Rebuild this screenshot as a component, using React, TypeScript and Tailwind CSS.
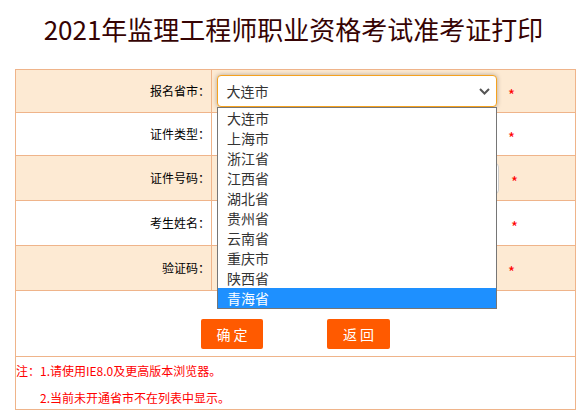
import React from "react";

const FONT = { fontFamily: '"Noto Sans CJK SC", "Liberation Sans", sans-serif' };

const options = ["大连市", "上海市", "浙江省", "江西省", "湖北省", "贵州省", "云南省", "重庆市", "陕西省", "青海省"];

function Label({ text }: { text: string }) {
  return (
    <div className="w-[196px] shrink-0 self-stretch border-r border-[#efb48a] flex items-center justify-end pr-[1px] text-[12px] text-black">
      {text}
    </div>
  );
}

function Star({ ml }: { ml: string }) {
  return <span className={`text-[15px] text-[#ff0000] leading-none mt-[7px] ${ml}`}>*</span>;
}

export default function App() {
  return (
    <div className="w-[587px] h-[416px] bg-white overflow-hidden" style={FONT}>
      <div className="h-[69px] pt-[10px] text-center text-[26px] leading-[38px] text-[#360303]">
        2021年监理工程师职业资格考试准考证打印
      </div>
      <div className="ml-[15px] w-[561px] border border-[#efb48a]">
        {/* Row 1 */}
        <div className="flex h-[43px] border-b border-[#efb48a] bg-[#fdead3]">
          <Label text="报名省市：" />
          <div className="flex items-center pl-[5px]">
            <div className="relative z-10">
              <div className="flex items-center justify-between w-[280px] h-[32px] bg-white border-[1.5px] border-[#f5a21f] rounded-[4px] shadow-[0_0_5px_rgba(0,0,0,0.3)] pl-[8.5px] pr-[6px] text-[14px] text-[#333]">
                <span>大连市</span>
                <svg width="11" height="7" viewBox="0 0 11 7">
                  <path d="M1 1 L5.5 5.5 L10 1" fill="none" stroke="#555" strokeWidth="2" />
                </svg>
              </div>
              <div className="absolute left-0 top-[32px] w-[280px] bg-white border border-[#767676]">
                {options.map((o, i) => (
                  <div
                    key={o}
                    className={`h-[20px] leading-[20px] pl-[9px] text-[14px] ${
                      i === options.length - 1 ? "bg-[#1e90ff] text-white" : "text-[#333]"
                    }`}
                  >
                    {o}
                  </div>
                ))}
              </div>
            </div>
            <Star ml="ml-[11px]" />
          </div>
        </div>
        {/* Row 2 */}
        <div className="flex h-[43px] border-b border-[#efb48a] bg-white">
          <Label text="证件类型：" />
          <div className="flex items-center pl-[5px]">
            <div className="w-[278px] h-[30px] border border-[#ccc] rounded-[4px] bg-white" />
            <Star ml="ml-[13px]" />
          </div>
        </div>
        {/* Row 3 */}
        <div className="flex h-[45px] border-b border-[#efb48a] bg-[#fdead3]">
          <Label text="证件号码：" />
          <div className="flex items-center pl-[5px]">
            <div className="w-[282px] h-[31px] border border-[#ccc] rounded-[4px] bg-white" />
            <Star ml="ml-[12px]" />
          </div>
        </div>
        {/* Row 4 */}
        <div className="flex h-[45px] border-b border-[#efb48a] bg-white">
          <Label text="考生姓名：" />
          <div className="flex items-center pl-[5px]">
            <div className="w-[278px] h-[31px] border border-[#ccc] rounded-[4px] bg-white" />
            <Star ml="ml-[16px]" />
          </div>
        </div>
        {/* Row 5 */}
        <div className="flex h-[45px] border-b border-[#efb48a] bg-[#fdead3]">
          <Label text="验证码：" />
          <div className="flex items-center pl-[5px]">
            <div className="w-[278px] h-[31px] border border-[#ccc] rounded-[4px] bg-white" />
            <Star ml="ml-[13px]" />
          </div>
        </div>
        {/* Buttons */}
        <div className="flex justify-center gap-[64px] h-[66px] border-b border-[#efb48a] pt-[28px]">
          <button className="w-[62px] h-[30px] bg-[#ff5a00] rounded-[2px] text-white text-[14px]">确 定</button>
          <button className="w-[63px] h-[30px] bg-[#ff5a00] rounded-[2px] text-white text-[14px]">返 回</button>
        </div>
        {/* Notes */}
        <div className="h-[52px] text-[12px] leading-[27px] text-[#ff0000]">
          <div>注：1.请使用IE8.0及更高版本浏览器。</div>
          <div className="pl-[24px]">2.当前未开通省市不在列表中显示。</div>
        </div>
      </div>
    </div>
  );
}
